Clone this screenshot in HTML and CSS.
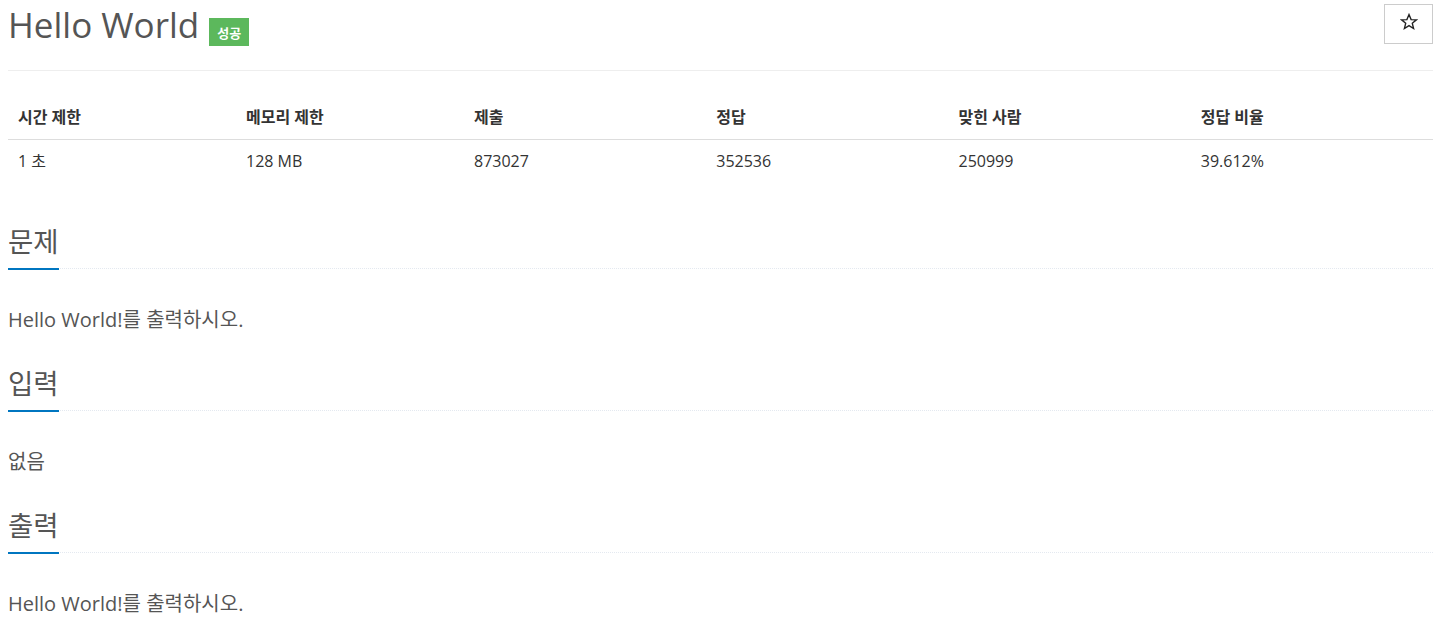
FILE: index.html
```html
<!DOCTYPE html>
<html lang="ko">
<head>
<meta charset="utf-8">
<title>Hello World</title>
<link rel="stylesheet" href="styles.css">
</head>
<body>
<div class="page">
  <div class="page-header">
    <div class="title-group">
      <h1 class="problem-title">Hello World</h1>
      <span class="badge-success">성공</span>
    </div>
    <button class="star-btn" type="button" aria-label="즐겨찾기">
      <svg class="star-icon" width="18" height="18" viewBox="0 0 18 18" aria-hidden="true">
        <polygon points="9,1.6 11.1,6.6 16.4,6.9 12.3,10.3 13.6,15.6 9,12.7 4.4,15.6 5.7,10.3 1.6,6.9 6.9,6.6" fill="none" stroke="#222" stroke-width="1.4" stroke-linejoin="miter"/>
      </svg>
    </button>
  </div>

  <table class="info-table">
    <thead>
      <tr>
        <th class="col-narrow">시간 제한</th>
        <th class="col-narrow">메모리 제한</th>
        <th class="col-wide">제출</th>
        <th class="col-wide">정답</th>
        <th class="col-wide">맞힌 사람</th>
        <th class="col-wide">정답 비율</th>
      </tr>
    </thead>
    <tbody>
      <tr>
        <td>1 초</td>
        <td>128 MB</td>
        <td>873027</td>
        <td>352536</td>
        <td>250999</td>
        <td>39.612%</td>
      </tr>
    </tbody>
  </table>

  <section class="section">
    <div class="headline"><h2>문제</h2></div>
    <p class="problem-text">Hello World!를 출력하시오.</p>
  </section>

  <section class="section">
    <div class="headline"><h2>입력</h2></div>
    <p class="problem-text">없음</p>
  </section>

  <section class="section">
    <div class="headline"><h2>출력</h2></div>
    <p class="problem-text">Hello World!를 출력하시오.</p>
  </section>
</div>
</body>
</html>
```

FILE: styles.css
```css
* { box-sizing: border-box; }

html, body {
  margin: 0;
  padding: 0;
  background: #fff;
}

body {
  font-family: "Open Sans", "Noto Sans CJK KR", sans-serif;
  color: #333;
}

.page {
  padding: 0 5px 0 8px;
}

.page-header {
  display: flex;
  justify-content: space-between;
  align-items: flex-start;
  padding-bottom: 21px;
  border-bottom: 1px solid #eee;
}

.title-group {
  display: flex;
  align-items: flex-start;
}

.problem-title {
  margin: 0;
  font-size: 35px;
  font-weight: 400;
  line-height: 49px;
  color: #555;
}

.badge-success {
  margin: 18px 0 0 10px;
  height: 28px;
  padding: 0 8px;
  display: inline-flex;
  align-items: center;
  background: #5cb85c;
  color: #fff;
  font-size: 13px;
  font-weight: 700;
}

.star-btn {
  margin-top: 4px;
  width: 49px;
  height: 40px;
  border: 1px solid #ccc;
  background: #fff;
  padding: 0;
  display: flex;
  align-items: center;
  justify-content: center;
}

.star-icon {
  display: block;
  margin-top: -4px;
}

.info-table {
  width: 100%;
  margin-top: 24px;
  border-collapse: collapse;
  font-size: 16px;
}

.col-narrow { width: 16%; }
.col-wide { width: 17%; }

.info-table th {
  text-align: left;
  font-weight: 700;
  padding: 10px 10px;
  line-height: 24px;
  border-bottom: 1px solid #ddd;
}

.info-table td {
  text-align: left;
  padding: 9px 10px;
  line-height: 24px;
}

.section {
  margin-top: 30px;
}

.info-table + .section {
  margin-top: 42px;
}

.headline {
  border-bottom: 1px dotted #e4e9f0;
  margin-bottom: 35px;
}

.headline h2 {
  display: inline-block;
  margin: 0 0 -2px 0;
  padding-bottom: 8px;
  font-size: 27.5px;
  font-weight: 400;
  line-height: 36px;
  color: #555;
  border-bottom: 2px solid #0076c0;
}

.problem-text {
  margin: 0;
  font-size: 20px;
  line-height: 32px;
  color: #555;
}
```
